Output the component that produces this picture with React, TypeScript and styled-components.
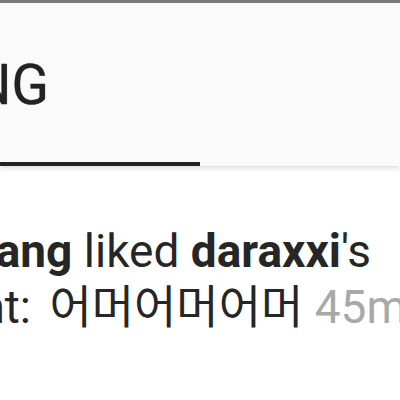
import styled, { createGlobalStyle } from "styled-components"

const GlobalStyle = createGlobalStyle`
  html, body {
    margin: 0;
    padding: 0;
    background: #ffffff;
    overflow: hidden;
  }
`

const Screen = styled.div`
  width: 400px;
  height: 400px;
  overflow: hidden;
  background: #ffffff;
  font-family: Roboto, "Noto Sans CJK KR", sans-serif;
  color: #262626;
`

const Header = styled.header`
  position: relative;
  z-index: 1;
  height: 163px;
  border-top: 3px solid #7a7a7a;
  background: #fafafa;
  box-shadow: 0 2px 5px rgba(0, 0, 0, 0.14);
  display: flex;
`

const Tab = styled.div<{ $active?: boolean }>`
  width: 200px;
  height: 100%;
  box-sizing: border-box;
  display: flex;
  align-items: center;
  border-bottom: 4px solid ${({ $active }) => ($active ? "#222222" : "transparent")};
`

const TabLabel = styled.span`
  margin-left: -255px;
  margin-top: 5px;
  font-size: 55px;
  font-weight: 400;
  -webkit-text-stroke: 0.4px #222222;
  white-space: nowrap;
  color: #222222;
`

const Feed = styled.div`
  padding-top: 57px;
`

const Notice = styled.p`
  margin: 0 0 0 -176px;
  font-size: 46px;
  line-height: 56px;
  white-space: nowrap;
`

const User = styled.b`
  font-weight: 700;
`

const Comment = styled.span`
  margin-left: 7px;
`

const Time = styled.span`
  color: #a8a8a8;
`

export default function App() {
  return (
    <Screen>
      <GlobalStyle />
      <Header>
        <Tab $active>
          <TabLabel>FOLLOWING</TabLabel>
        </Tab>
        <Tab />
      </Header>
      <Feed>
        <Notice>
          <User>yeon_bbang</User> liked <User>daraxxi</User>'s
          <br />
          comment: <Comment>어머어머어머</Comment> <Time>45m</Time>
        </Notice>
      </Feed>
    </Screen>
  )
}
